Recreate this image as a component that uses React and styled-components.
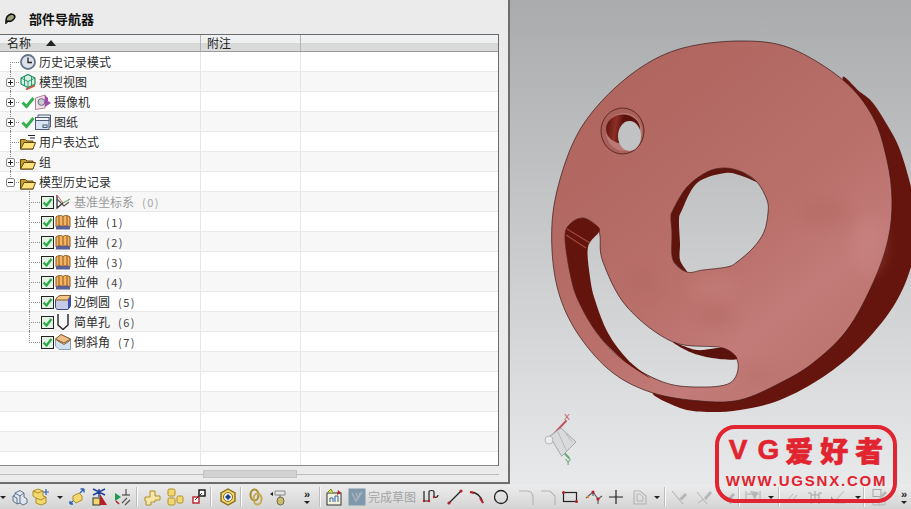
import React from "react";
import styled, { createGlobalStyle } from "styled-components";

const GlobalStyle = createGlobalStyle`
  html, body {
    margin: 0;
    padding: 0;
    background: #e6e7e8;
  }
  body {
    font-family: "Noto Sans CJK SC", "Liberation Sans", sans-serif;
    font-size: 12px;
    color: #2a2a2a;
  }
`;

const Screen = styled.div`
  position: relative;
  width: 911px;
  height: 509px;
  overflow: hidden;
  display: flex;
  flex-direction: column;
`;

const Main = styled.div`
  display: flex;
  height: 485px;
`;

const Panel = styled.div`
  width: 510px;
  height: 484px;
  box-sizing: border-box;
  flex-shrink: 0;
  display: flex;
  flex-direction: column;
  background: #ebebeb;
  border-right: 2px solid #6e6e6e;
  border-bottom: 2px solid #6e6e6e;
  padding-right: 9px;
`;

const TitleBar = styled.div`
  height: 34px;
  flex-shrink: 0;
  display: flex;
  align-items: center;
  gap: 13px;
  padding: 2px 0 0 5px;
  box-sizing: border-box;
`;

const Title = styled.h2`
  margin: 0;
  font-size: 13px;
  line-height: 1;
  font-weight: 700;
  color: #111;
`;

const Table = styled.div`
  height: 432px;
  flex-shrink: 0;
  overflow: hidden;
  background: #fff;
  border-top: 1px solid #6a6a6a;
  border-right: 1px solid #6a6a6a;
  border-bottom: 1px solid #8a8a8a;
  box-sizing: border-box;
`;

const HeaderRow = styled.div`
  display: grid;
  grid-template-columns: 201px 100px 1fr;
  height: 16px;
  background: linear-gradient(#f1f2f3 0%, #eeeff0 50%, #d6d7d7 52%, #dcdcdc 100%);
  border-bottom: 1px solid #9a9a9a;
`;

const HeaderCell = styled.div`
  display: flex;
  align-items: center;
  gap: 15px;
  padding-left: ${(p) => p.$pad}px;
  border-right: 1px solid #b4b4b4;
  font-size: 12px;
  line-height: 1;
  color: #222;
  &:last-child {
    border-right: 0;
  }
`;

const SortArrow = styled.span`
  width: 0;
  height: 0;
  border-left: 5px solid transparent;
  border-right: 5px solid transparent;
  border-bottom: 6px solid #222;
`;

const Row = styled.div`
  display: grid;
  grid-template-columns: 201px 100px 1fr;
  height: 20px;
  box-sizing: border-box;
  background: ${(p) => (p.$alt ? "#f7f7f7" : "#fff")};
  border-bottom: 1px solid #e9e9e9;
`;

const NameCell = styled.div`
  display: flex;
  align-items: center;
  padding-left: ${(p) => p.$indent || 0}px;
  border-right: 1px solid #e6e6e6;
`;

const BlankCell = styled.div`
  border-right: 1px solid #e6e6e6;
  &:last-child {
    border-right: 0;
  }
`;

const Guide = styled.span`
  position: relative;
  width: ${(p) => p.$w}px;
  height: 20px;
  flex-shrink: 0;
  display: flex;
  align-items: center;
  &::before {
    content: "";
    position: absolute;
    left: ${(p) => p.$x}px;
    top: ${(p) => (p.$up ? "-1px" : "10px")};
    bottom: ${(p) => (p.$down ? "-1px" : "9px")};
    border-left: 1px dotted #8c8c8c;
  }
  &::after {
    content: "";
    position: absolute;
    left: ${(p) => p.$x}px;
    right: 1px;
    top: 10px;
    border-top: 1px dotted #8c8c8c;
  }
`;

const Toggle = styled.span`
  position: relative;
  z-index: 1;
  margin-left: 6px;
  width: 9px;
  height: 9px;
  box-sizing: border-box;
  border: 1px solid #8a8a8a;
  border-radius: 2px;
  background: #fff;
  &::before {
    content: "";
    position: absolute;
    left: 1px;
    right: 1px;
    top: 3px;
    border-top: 1px solid #222;
  }
  &::after {
    content: "";
    display: ${(p) => (p.$open ? "none" : "block")};
    position: absolute;
    top: 1px;
    bottom: 1px;
    left: 3px;
    border-left: 1px solid #222;
  }
`;

const IconBox = styled.span`
  display: flex;
  flex-shrink: 0;
  margin-left: ${(p) => p.$gap || 0}px;
`;

const Label = styled.span`
  margin-left: 3px;
  font-size: 12px;
  line-height: 1;
  white-space: nowrap;
  color: ${(p) => (p.$muted ? "#9b9b9b" : "#2c2c2c")};
`;

const Seq = styled.span`
  margin-left: 8px;
  font-size: 11px;
  letter-spacing: 1.4px;
  line-height: 1;
  color: ${(p) => (p.$muted ? "#a5a5a5" : "#444")};
`;

const ScrollArea = styled.div`
  flex: 1;
  display: flex;
  align-items: center;
  background: linear-gradient(#bdbdbd, #bdbdbd) center / 100% 1px no-repeat;
`;

const ScrollThumb = styled.div`
  margin-left: 203px;
  width: 92px;
  height: 6px;
  background: #d2d2d2;
  border: 1px solid #ebebeb;
  outline: 1px solid #c4c4c4;
  outline-offset: -1px;
`;

const Viewport = styled.div`
  flex: 1;
  height: 485px;
  background: linear-gradient(#a9abac, #e8e9ea);
`;

const Scene = styled.svg`
  display: block;
`;

const Toolbar = styled.div`
  height: 24px;
  display: flex;
  align-items: center;
  background: linear-gradient(#ececec, #d4d4d4);
  overflow: hidden;
`;

const Tool = styled.span`
  display: flex;
  flex-shrink: 0;
  margin-left: ${(p) => p.$gap}px;
  opacity: ${(p) => (p.$dim ? 0.75 : 1)};
`;

const Separator = styled.span`
  flex-shrink: 0;
  width: 1px;
  height: 20px;
  margin-left: ${(p) => p.$gap}px;
  margin-right: 1px;
  background: #fafafa;
  box-shadow: -1px 0 0 #bdbdbd;
`;

const Caret = styled.span`
  flex-shrink: 0;
  margin-left: ${(p) => p.$gap}px;
  width: 0;
  height: 0;
  border-left: 3px solid transparent;
  border-right: 3px solid transparent;
  border-top: 3px solid #222;
`;

const More = styled.span`
  flex-shrink: 0;
  width: 12px;
  margin-left: ${(p) => p.$gap}px;
  display: flex;
  flex-direction: column;
  align-items: center;
  gap: 3px;
  font: 700 11px/8px "Liberation Sans", sans-serif;
  color: #222;
`;

const DoneLabel = styled.span`
  flex-shrink: 0;
  width: 48px;
  margin-left: 2px;
  font-size: 12px;
  line-height: 1;
  white-space: nowrap;
  color: #a2a4a6;
`;

const Stamp = styled.div`
  position: absolute;
  left: 715px;
  top: 425px;
  width: 182px;
  height: 78px;
  box-sizing: border-box;
  border: 4px solid #e1242f;
  border-radius: 20px;
  display: flex;
  flex-direction: column;
  align-items: center;
  color: #e1242f;
`;

const StampTitle = styled.div`
  display: flex;
  align-items: center;
  height: 42px;
  font-size: 28px;
  line-height: 1;
  font-weight: 900;
  -webkit-text-stroke: 0.6px #e1242f;
`;

const StampLatin = styled.span`
  font-family: "Liberation Sans", sans-serif;
  font-weight: 700;
  margin-right: ${(p) => p.$gap || 0}px;
`;

const StampHan = styled.span`
  margin-left: 6px;
  letter-spacing: 7px;
  margin-right: -7px;
`;

const StampUrl = styled.div`
  font: 700 15px/16px "Liberation Sans", sans-serif;
  letter-spacing: 1.8px;
  margin-left: 1px;
  margin-top: 2px;
`;

const Svg = ({ w = 16, h = 16, box, children }) => (
  <svg width={w} height={h} viewBox={box || `0 0 ${w} ${h}`}>
    {children}
  </svg>
);

// tree icons
const ClockIcon = () => (
  <Svg>
    <circle cx="8" cy="8" r="7" fill="#dde2ea" stroke="#66758c" strokeWidth="1.8" />
    <path d="M8 3.5V8.5H12" fill="none" stroke="#222" strokeWidth="1.3" />
  </Svg>
);
const ModelIcon = () => (
  <Svg>
    <path d="M8 0.5L15 4V10L8 13.5L1 10V4Z" fill="#d8f0e4" stroke="#1f8f62" strokeWidth="1.2" />
    <path d="M1 4L8 7.5L15 4M8 7.5V13.5M4.5 2.2V11.8M11.5 2.2V11.8" fill="none" stroke="#1f8f62" strokeWidth="0.9" />
    <path d="M6 15.5L15 11.5" stroke="#c9553a" strokeWidth="1.8" />
  </Svg>
);
const Tick = () => (
  <Svg w={14} h={14}>
    <path d="M1.5 7.5L5.5 11.5L12.5 3" fill="none" stroke="#35b04f" strokeWidth="3" />
  </Svg>
);
const CameraIcon = () => (
  <Svg>
    <path d="M0.5 4L10 1V14L0.5 15.5Z" fill="#f3e3ea" stroke="#b77f98" />
    <circle cx="6.5" cy="8" r="3.4" fill="#c9c9d4" stroke="#6d6d80" />
    <path d="M10 1L13 4V7L16 9L13 11L10 13Z" fill="#a548b0" />
  </Svg>
);
const SheetIcon = () => (
  <Svg>
    <path d="M3 4V1H15.5V13H14" fill="#eef1f5" stroke="#4d5d75" />
    <rect x="0.5" y="3.5" width="13.5" height="12" fill="#d9e4f2" stroke="#4d5d75" />
    <rect x="0.5" y="3.5" width="13.5" height="3" fill="#f3f5f8" stroke="#4d5d75" />
    <rect x="8" y="11" width="4" height="2.5" fill="none" stroke="#4d5d75" />
  </Svg>
);
const FolderIcon = ({ lined }) => (
  <Svg>
    {lined && <path d="M8 1.5H15M10 4H15" stroke="#222" strokeWidth="1" />}
    <path d="M0.5 15V5.5H5.5L7 7H13V15Z" fill="#c89f2e" stroke="#5f4510" />
    <path d="M0.5 15L4 8.5H15.5L13 15Z" fill="#fce27c" stroke="#5f4510" />
  </Svg>
);
const CheckBox = () => (
  <Svg w={13} h={13}>
    <rect x="0.5" y="0.5" width="12" height="12" fill="#e5f4e6" stroke="#222" />
    <path d="M2.5 6.5L5.5 9.5L10.5 3" fill="none" stroke="#2faa4a" strokeWidth="2.4" />
  </Svg>
);
const DatumIcon = () => (
  <Svg>
    <path d="M2 1V14L8 9" fill="none" stroke="#333" strokeWidth="1.3" />
    <path d="M2 5L9 12L14 8" fill="none" stroke="#555" strokeWidth="1.1" />
    <path d="M8 9L15 5" stroke="#6fae70" strokeWidth="1.2" />
    <path d="M2 1L8 9" stroke="#c66" strokeWidth="1" />
  </Svg>
);
const ExtrudeIcon = () => (
  <Svg>
    <path d="M1 3C4 0.5 8 1.5 8 3C8 1.5 12 0.5 15 3V13C12 11 8 12 8 13C8 12 4 11 1 13Z" fill="#f4b562" stroke="#8a5620" />
    <path d="M4 2V12M8 3V13M12 2V12" stroke="#8a5620" strokeWidth="1" />
    <path d="M1 13C4 11 8 12 8 13C8 12 12 11 15 13V15.5H1Z" fill="#5a5f96" />
  </Svg>
);
const BlendIcon = () => (
  <Svg>
    <path d="M0.5 6C2 3 4 1.5 6 1.5H15.5V12L13 15.5H3C1 15.5 0.5 14 0.5 12Z" fill="#c5cbe6" stroke="#3f4c8e" />
    <path d="M0.5 6C2 3 4 1.5 6 1.5H15.5L13 6Z" fill="#f6c98b" stroke="#8f5b1f" />
    <path d="M13 6V15.5L15.5 12V1.5Z" fill="#3f4fb5" />
  </Svg>
);
const HoleIcon = () => (
  <Svg>
    <path d="M3 0V11L8 15.5L13 11V0" fill="none" stroke="#222" strokeWidth="1.4" />
  </Svg>
);
const ChamferIcon = () => (
  <Svg>
    <path d="M0.5 5L6 0.5L15.5 5V15.5H4L0.5 12Z" fill="#cfe0f0" stroke="#8aa0bb" />
    <path d="M0.5 5L6 0.5L15.5 5L9 9Z" fill="#eebf8a" stroke="#8f5b1f" />
    <path d="M1.5 6L9 10.5L15.5 6" fill="none" stroke="#8f5b1f" />
  </Svg>
);
const PinIcon = () => (
  <Svg w={11} h={11}>
    <path d="M1 8C1 5 3 2 6 1C9 1 10.5 3 9.5 5C8 8 5 9 3 8L1 10Z" fill="#9aa07a" stroke="#111" strokeWidth="1.6" />
  </Svg>
);

const yellow = "#f3d870";
const ochre = "#b08e2a";

// toolbar icons
const T = ({ children }) => <Svg w={18} h={18}>{children}</Svg>;
const tools = {
  cube: (
    <T>
      <path d="M4 5L9 2.5L13 5V9L16 11V15L12 17L9 15L6 16L2 13V8L4 7Z" fill="#dfe6ef" stroke="#5f7389" />
      <path d="M4 5L9 8L13 5M9 8V15M2 8L6 10V16" fill="none" stroke="#5f7389" />
    </T>
  ),
  cubesPlus: (
    <T>
      <path d="M1 3L6 1L11 3V8L14 9V15L9 17L4 15V10L1 8Z" fill={yellow} stroke={ochre} />
      <path d="M1 3L6 5L11 3M4 10L9 12L14 9" fill="none" stroke={ochre} />
      <path d="M14 1V7M11 4H17" stroke="#2f62b5" strokeWidth="1.2" />
    </T>
  ),
  arrows: (
    <T>
      <path d="M5 8L11 5L14 8V12L8 15L5 12Z" fill={yellow} stroke={ochre} />
      <path d="M12 5L16 1M16 1H12.5M16 1V4.5" fill="none" stroke="#2f62b5" strokeWidth="1.4" />
      <path d="M5 13L2 16M2 16H5M2 16V13" fill="none" stroke="#2f62b5" strokeWidth="1.4" />
    </T>
  ),
  mirror: (
    <T>
      <path d="M2 1L8 4L14 1M2 7L8 4L14 7M8 1V9" fill="none" stroke="#1c3f9a" strokeWidth="1.4" />
      <rect x="2" y="10" width="7" height="7" fill={yellow} stroke="#333" />
      <path d="M9 6L16 17H9Z" fill="#b41f2a" />
    </T>
  ),
  parallel: (
    <T>
      <path d="M1 5L7 9L1 13Z" fill="#1f9a4d" />
      <path d="M2 13L5 16" stroke="#b41f2a" strokeWidth="1.6" />
      <path d="M12 1V7M8 7H16" stroke="#333" />
      <path d="M8 15L13 10M11 17L16 12" stroke="#555" strokeWidth="1.2" />
    </T>
  ),
  pipes: (
    <T>
      <path d="M2 9H7V3H12V8H17V12H12V14H8V17H3V13H2Z" fill="#f5e7a8" stroke={ochre} />
    </T>
  ),
  cubes: (
    <T>
      <rect x="2" y="1" width="7" height="7" rx="1.5" fill={yellow} stroke={ochre} />
      <rect x="2" y="10" width="7" height="7" rx="1.5" fill={yellow} stroke={ochre} />
      <rect x="11" y="8" width="6" height="7" rx="1.5" fill={yellow} stroke={ochre} />
    </T>
  ),
  squares: (
    <T>
      <rect x="9" y="2" width="6" height="6" fill="#fff" stroke="#111" strokeWidth="1.4" />
      <rect x="3" y="9" width="6" height="6" fill="#fff" stroke="#b41f2a" strokeWidth="1.4" />
      <path d="M5 12L12 5" stroke="#333" />
    </T>
  ),
  hexagon: (
    <T>
      <path d="M9 1L16 5V13L9 17L2 13V5Z" fill="#f3d870" stroke="#8a6d14" strokeWidth="1.4" />
      <circle cx="9" cy="9" r="4.5" fill="#eef3fa" stroke="#8a6d14" />
      <path d="M9 6L12 9L9 12L6 9Z" fill="#1f3f7d" />
    </T>
  ),
  rings: (
    <T>
      <ellipse cx="7.5" cy="7" rx="4" ry="5.5" fill="none" stroke="#a98c2e" strokeWidth="2" />
      <ellipse cx="10.5" cy="11" rx="4" ry="5.5" fill="none" stroke="#c6ab52" strokeWidth="2" />
    </T>
  ),
  roll: (
    <T>
      <path d="M6 3H16V7H6Z" fill="#e6e6e6" stroke="#888" />
      <path d="M11 7V10" stroke="#666" />
      <ellipse cx="11.5" cy="13" rx="3.5" ry="4" fill="#cdbb70" stroke="#6f6b4a" />
      <path d="M1 6L4 4V8Z" fill="#222" />
    </T>
  ),
  task: (
    <T>
      <rect x="2" y="5" width="14" height="12" fill="#f5f2dc" stroke="#333" />
      <path d="M5 14V10H8V14M10 14V8H13V14" fill="none" stroke="#2f62b5" />
      <path d="M3 4L6 1L8 5" fill="#cbe04f" stroke="#7f8f1f" />
      <path d="M13 2L16 5L12 7" fill="#b41f2a" />
    </T>
  ),
  done: (
    <T>
      <rect x="0.5" y="0.5" width="17" height="17" fill="#7f99ab" />
      <path d="M4 5L8 13L14 4M8 5L10 10M11 5L12 8" fill="none" stroke="#a9b4bc" strokeWidth="1.4" />
    </T>
  ),
  profile: (
    <T>
      <path d="M2 3V13H7V4C7 2 12 2 12 4V8C12 10 16 10 16 7" fill="none" stroke="#222" strokeWidth="1.2" />
      <circle cx="2" cy="13" r="1.2" fill="#b41f2a" />
      <circle cx="7" cy="13" r="1.2" fill="#b41f2a" />
      <circle cx="12" cy="9" r="1.2" fill="#b41f2a" />
    </T>
  ),
  line: (
    <T>
      <path d="M3 15L15 3" stroke="#222" strokeWidth="1.2" />
      <circle cx="3" cy="15" r="1.6" fill="#b41f2a" />
      <circle cx="15" cy="3" r="1.6" fill="#b41f2a" />
    </T>
  ),
  arc: (
    <T>
      <path d="M2 4C8 4 13 8 15 15" fill="none" stroke="#222" strokeWidth="1.3" />
      <path d="M2 4L6 5M12 10L15 15" stroke="#b41f2a" strokeWidth="2" />
    </T>
  ),
  circle: (
    <T>
      <circle cx="9" cy="9" r="6.5" fill="none" stroke="#222" strokeWidth="1.3" />
    </T>
  ),
  fillet: (
    <T>
      <path d="M1 3H9C13 3 15 6 15 10V17" fill="none" stroke="#a5a5a5" strokeWidth="1.1" />
    </T>
  ),
  chamfer: (
    <T>
      <path d="M1 3H10L15 8V17" fill="none" stroke="#a5a5a5" strokeWidth="1.1" />
    </T>
  ),
  rect: (
    <T>
      <rect x="2.5" y="4.5" width="13" height="9" fill="none" stroke="#222" strokeWidth="1.2" />
      <circle cx="2.5" cy="4.5" r="1.5" fill="#b41f2a" />
      <circle cx="15.5" cy="13.5" r="1.5" fill="#b41f2a" />
    </T>
  ),
  poly: (
    <T>
      <path d="M1 10L8 4L13 11L17 8M8 4V8M13 11V16" fill="none" stroke="#555" strokeWidth="1.1" />
      <circle cx="8" cy="4" r="1.6" fill="#b41f2a" />
      <circle cx="13" cy="11" r="1.6" fill="#b41f2a" />
      <circle cx="3" cy="9" r="1.2" fill="#d8912f" />
    </T>
  ),
  cross: (
    <T>
      <path d="M9 2V16M2 9H16" stroke="#222" strokeWidth="1.2" />
    </T>
  ),
  offset: (
    <T>
      <path d="M3 3H9L15 8V16H3Z" fill="none" stroke="#a5a5a5" strokeWidth="1.1" />
      <path d="M6 6H9L12 9V13H6Z" fill="none" stroke="#a5a5a5" />
    </T>
  ),
  pencilA: (
    <T>
      <path d="M2 3L13 16" stroke="#9a9a9a" />
      <path d="M9 11L15 5L17 7L12 12Z" fill="#a5a8a6" />
    </T>
  ),
  pencilB: (
    <T>
      <path d="M2 4L12 16M3 15L9 11" stroke="#a5a5a5" />
      <path d="M9 10L15 3L17 5L11 12Z" fill="#a5a8a6" />
    </T>
  ),
  dim: (
    <T>
      <path d="M2 3V13M16 3V13" stroke="#9a9a9a" />
      <path d="M3 6H15" stroke="#9a9a9a" />
      <path d="M6 3L11 12L14 4Z" fill="#a5a8a6" />
    </T>
  ),
  slant: (
    <T>
      <path d="M3 14L10 6M7 15L14 7" stroke="#a5a5a5" />
    </T>
  ),
  fence: (
    <T>
      <path d="M2 5H5V16M9 3V14M13 5H16M13 5V16M5 7H13" fill="none" stroke="#8f8f8f" />
    </T>
  ),
  tilt: (
    <T>
      <path d="M1 8L5 13L1 14Z" fill="#8e9a84" />
      <path d="M5 15H15M10 15V11M7 11L14 3" stroke="#a5a5a5" />
    </T>
  ),
  box: (
    <T>
      <rect x="3" y="1.5" width="8" height="7" fill="none" stroke="#8f8f8f" />
      <path d="M3 12H15V17H3ZM9 12V17" fill="none" stroke="#a5a5a5" />
      <path d="M9 9L15 3L17 5L11 11Z" fill="#a5a8a6" />
    </T>
  ),
};

const toolbar = [
  ["caret", 0], ["cube", 5], ["cubesPlus", 3], ["caret", 7], ["arrows", 5], ["mirror", 5], ["parallel", 5],
  ["sep", 5], ["pipes", 4], ["cubes", 5], ["squares", 6], ["sep", 3], ["hexagon", 6], ["sep", 4],
  ["rings", 4], ["roll", 4], ["more", 14], ["sep", 7], ["task", 3], ["done", 5], ["label", 2],
  ["profile", 6], ["line", 6], ["arc", 4], ["circle", 6], ["fillet", 8], ["chamfer", 4], ["rect", 3],
  ["poly", 6], ["cross", 4], ["offset", 6], ["caret", 5], ["sep", 5], ["pencilA", 3], ["pencilB", 7],
  ["pencilA", 5], ["sep", 3], ["dim", 3], ["caret", 6], ["sep", 5], ["slant", 2], ["fence", 5],
  ["tilt", 6], ["caret", 7], ["sep", 3], ["box", 4], ["more", 10],
];

const dimmed = ["pencilA", "pencilB", "dim", "slant", "fence", "tilt", "box", "fillet", "chamfer", "offset"];

const rootRows = [
  { icons: [<ClockIcon />], label: "历史记录模式", down: true },
  { icons: [<ModelIcon />], label: "模型视图", toggle: "plus", up: true, down: true },
  { icons: [<Tick />, <CameraIcon />], label: "摄像机", toggle: "plus", up: true, down: true },
  { icons: [<Tick />, <SheetIcon />], label: "图纸", toggle: "plus", up: true, down: true },
  { icons: [<FolderIcon lined />], label: "用户表达式", up: true, down: true },
  { icons: [<FolderIcon />], label: "组", toggle: "plus", up: true, down: true },
  { icons: [<FolderIcon />], label: "模型历史记录", toggle: "minus", up: true },
];

const featureRows = [
  { icon: <DatumIcon />, label: "基准坐标系", seq: "(0)", muted: true },
  { icon: <ExtrudeIcon />, label: "拉伸", seq: "(1)" },
  { icon: <ExtrudeIcon />, label: "拉伸", seq: "(2)" },
  { icon: <ExtrudeIcon />, label: "拉伸", seq: "(3)" },
  { icon: <ExtrudeIcon />, label: "拉伸", seq: "(4)" },
  { icon: <BlendIcon />, label: "边倒圆", seq: "(5)" },
  { icon: <HoleIcon />, label: "简单孔", seq: "(6)" },
  { icon: <ChamferIcon />, label: "倒斜角", seq: "(7)" },
];

const EMPTY_ROWS = 6;

// closed smooth outline through measured points
const smooth = (pts) => {
  const n = pts.length;
  let d = `M${pts[0][0]} ${pts[0][1]}`;
  for (let i = 0; i < n; i++) {
    const p0 = pts[(i - 1 + n) % n];
    const p1 = pts[i];
    const p2 = pts[(i + 1) % n];
    const p3 = pts[(i + 2) % n];
    const c1x = (p1[0] + (p2[0] - p0[0]) / 6).toFixed(1);
    const c1y = (p1[1] + (p2[1] - p0[1]) / 6).toFixed(1);
    const c2x = (p2[0] - (p3[0] - p1[0]) / 6).toFixed(1);
    const c2y = (p2[1] - (p3[1] - p1[1]) / 6).toFixed(1);
    d += `C${c1x} ${c1y} ${c2x} ${c2y} ${p2[0]} ${p2[1]}`;
  }
  return d + "Z";
};

const faceOutline = [
  [740, 41], [790, 48], [843, 80], [873, 117], [887, 160], [892, 200], [888, 240], [873, 283], [847, 330],
  [813, 363], [780, 383], [740, 400], [700, 401], [653, 393], [613, 373], [580, 337], [560, 297], [552, 250],
  [555, 200], [573, 143], [600, 103], [640, 68], [683, 48],
];
const centerHole = [
  [725, 168], [742, 172], [757, 182], [767, 200], [768, 213], [764, 232], [753, 248], [737, 262], [727, 267],
  [703, 270], [687, 272], [673, 260], [672, 233], [671, 218], [673, 210], [687, 187], [707, 172],
];
const slotHole = [
  [583, 218], [597, 226], [600, 236], [603, 262], [627, 307], [673, 342], [723, 348], [738, 363], [730, 383],
  [697, 387], [663, 382], [623, 360], [597, 333], [578, 300], [570, 273], [565, 237], [570, 224],
];

const rim = [
  [843, 80], [860, 92], [873, 103], [889, 128], [900, 150], [911, 187], [918, 225], [911, 267], [893, 307],
  [860, 347], [823, 377], [780, 400], [740, 410], [707, 412], [680, 408], [653, 393], [700, 395], [760, 380],
  [850, 300], [880, 160],
];
const holeWall = [
  [687, 272], [673, 260], [672, 233], [671, 218], [673, 210], [687, 187], [707, 172], [725, 168], [742, 172],
  [757, 182], [742, 176], [725, 173], [697, 183], [682, 210], [679, 220], [680, 243], [680, 260],
];
const slotWall = [
  [599, 232], [597, 226], [583, 218], [570, 224], [565, 237], [570, 273], [578, 300], [597, 333], [623, 360],
  [650, 378], [628, 360], [608, 333], [595, 300], [590, 277], [588, 247],
];
const slotWallEnd = [[673, 342], [697, 350], [723, 348], [737, 359], [712, 358], [690, 352]];

const blotches = [
  { cx: 825, cy: 212, rx: 24, ry: 14, fill: "#a85e58", o: 0.25 },
  { cx: 868, cy: 245, rx: 16, ry: 30, fill: "#d08c8a", o: 0.3 },
  { cx: 713, cy: 287, rx: 26, ry: 12, fill: "#cc8884", o: 0.3 },
  { cx: 716, cy: 316, rx: 18, ry: 10, fill: "#a85e58", o: 0.25 },
  { cx: 643, cy: 282, rx: 16, ry: 14, fill: "#a85e58", o: 0.18 },
  { cx: 757, cy: 374, rx: 16, ry: 8, fill: "#a85e58", o: 0.2 },
];

const PartView = () => (
  <Scene width="401" height="485" viewBox="510 0 401 485">
    <defs>
      <linearGradient id="face" gradientUnits="userSpaceOnUse" x1="640" y1="60" x2="860" y2="340">
        <stop offset="0" stopColor="#b0665f" />
        <stop offset="0.55" stopColor="#b96f6a" />
        <stop offset="0.8" stopColor="#c27b78" />
        <stop offset="1" stopColor="#bd7570" />
      </linearGradient>
      <linearGradient id="rimWall" gradientUnits="userSpaceOnUse" x1="606" y1="120" x2="640" y2="125">
        <stop offset="0" stopColor="#5c120c" />
        <stop offset="0.3" stopColor="#8c2f27" />
        <stop offset="0.5" stopColor="#5c120c" />
      </linearGradient>
      <filter id="soft" x="-50%" y="-50%" width="200%" height="200%">
        <feGaussianBlur stdDeviation="7" />
      </filter>
    </defs>
    <path d={smooth(rim)} fill="#66150e" />
    <path
      d={`${smooth(faceOutline)}${smooth(centerHole)}${smooth(slotHole)}`}
      fill="url(#face)"
      fillRule="evenodd"
      stroke="#3a1512"
      strokeWidth="0.7"
    />
    {blotches.map((b) => (
      <ellipse key={b.cx} cx={b.cx} cy={b.cy} rx={b.rx} ry={b.ry} fill={b.fill} opacity={b.o} filter="url(#soft)" />
    ))}
    <path d={smooth(holeWall)} fill="#5f140d" />
    <path d={smooth(slotWall)} fill="#62140d" />
    <path d="M567 229L590 243M566 235L586 248" stroke="#a5463c" strokeWidth="1.2" />
    <path d={smooth(slotWallEnd)} fill="#5c120c" />
    <ellipse cx="622.5" cy="131" rx="21.5" ry="23" fill="#a9605a" stroke="#4a1a16" strokeWidth="0.8" />
    <ellipse cx="624" cy="132" rx="18" ry="19" fill="#b87a74" />
    <ellipse cx="623" cy="129" rx="17" ry="14.5" fill="url(#rimWall)" />
    <ellipse cx="629.5" cy="136" rx="11.5" ry="15" fill="#c0c2c3" />
    <g fill="none" strokeLinecap="round">
      <path d="M551 437L566 421" stroke="#c0565e" strokeWidth="2" />
      <path d="M557 445L569 458" stroke="#6cab78" strokeWidth="2" />
      <path d="M550 436L561 428L576 442L562 456Z" fill="#d8dadb" stroke="#a5a8aa" />
      <path d="M558 432L566 450M566 434L572 442" stroke="#b6b9bb" />
    </g>
    <circle cx="549" cy="440" r="4" fill="#eceded" stroke="#b5b7b8" />
    <text x="564" y="420" fontFamily="Liberation Sans, sans-serif" fontSize="9" fill="#c0565e">X</text>
    <text x="565" y="465" fontFamily="Liberation Sans, sans-serif" fontSize="9" fill="#5f9c6a">Y</text>
  </Scene>
);

const App = () => (
  <Screen>
    <GlobalStyle />
    <Main>
      <Panel>
        <TitleBar>
          <PinIcon />
          <Title>部件导航器</Title>
        </TitleBar>
        <Table>
          <HeaderRow>
            <HeaderCell $pad={7}>
              名称
              <SortArrow />
            </HeaderCell>
            <HeaderCell $pad={6}>附注</HeaderCell>
            <HeaderCell />
          </HeaderRow>
          {rootRows.map((row, i) => (
            <Row key={row.label} $alt={i % 2 === 1}>
              <NameCell>
                <Guide $w={20} $x={10} $up={row.up} $down={row.down}>
                  {row.toggle && <Toggle $open={row.toggle === "minus"} />}
                </Guide>
                {row.icons.map((icon, k) => (
                  <IconBox key={k} $gap={row.icons.length > 1 && k === 0 ? 1 : 0}>
                    {icon}
                  </IconBox>
                ))}
                <Label>{row.label}</Label>
              </NameCell>
              <BlankCell />
              <BlankCell />
            </Row>
          ))}
          {featureRows.map((row, i) => (
            <Row key={row.seq} $alt={i % 2 === 0}>
              <NameCell $indent={29}>
                <Guide $w={12} $x={0} $up $down={i < featureRows.length - 1} />
                <IconBox>
                  <CheckBox />
                </IconBox>
                <IconBox $gap={1}>{row.icon}</IconBox>
                <Label $muted={row.muted}>{row.label}</Label>
                <Seq $muted={row.muted}>{row.seq}</Seq>
              </NameCell>
              <BlankCell />
              <BlankCell />
            </Row>
          ))}
          {Array.from({ length: EMPTY_ROWS }).map((_, i) => (
            <Row key={i} $alt={i % 2 === 0}>
              <NameCell />
              <BlankCell />
              <BlankCell />
            </Row>
          ))}
        </Table>
        <ScrollArea>
          <ScrollThumb />
        </ScrollArea>
      </Panel>
      <Viewport>
        <PartView />
      </Viewport>
    </Main>
    <Toolbar>
      {toolbar.map(([name, gap], i) => {
        if (name === "caret") return <Caret key={i} $gap={gap} />;
        if (name === "sep") return <Separator key={i} $gap={gap} />;
        if (name === "label") return <DoneLabel key={i}>完成草图</DoneLabel>;
        if (name === "more")
          return (
            <More key={i} $gap={gap}>
              »
              <Caret $gap={0} />
            </More>
          );
        return (
          <Tool key={i} $gap={gap} $dim={dimmed.includes(name)}>
            {tools[name]}
          </Tool>
        );
      })}
    </Toolbar>
    <Stamp>
      <StampTitle>
        <StampLatin $gap={10}>V</StampLatin>
        <StampLatin>G</StampLatin>
        <StampHan>爱好者</StampHan>
      </StampTitle>
      <StampUrl>WWW.UGSNX.COM</StampUrl>
    </Stamp>
  </Screen>
);

export default App;
